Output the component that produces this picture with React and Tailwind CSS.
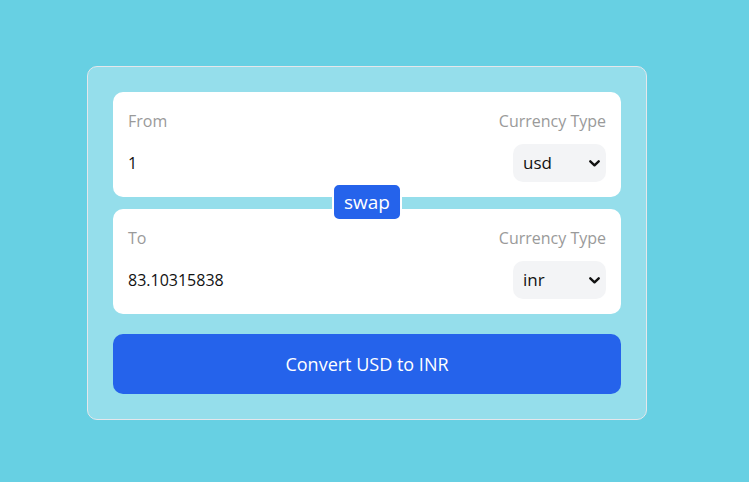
import React from "react";

const font = { fontFamily: '"Open Sans", "Noto Sans", sans-serif' };

function Chevron() {
  return (
    <svg width="11" height="7" viewBox="0 0 11 7" className="absolute right-[6px] top-[16px] pointer-events-none">
      <path d="M1.3 1.3 L5.5 5.3 L9.7 1.3" fill="none" stroke="#111" strokeWidth="2.4" strokeLinecap="round" strokeLinejoin="round" />
    </svg>
  );
}

function InputBox({ label, value, currency }) {
  return (
    <div className="bg-white px-[15px] pt-[16px] pb-[14px] rounded-[10px] text-[16px] flex">
      <div className="w-1/2">
        <label className="text-[#9a9a9a] mb-[9px] block leading-[26px]">{label}</label>
        <div className="h-[40px] leading-[40px] text-[#111]">{value}</div>
      </div>
      <div className="w-1/2 flex flex-col items-end text-right">
        <p className="text-[#9a9a9a] mb-[10px] w-full leading-[26px]">Currency Type</p>
        <div className="relative w-[93px] h-[38px] rounded-[10px] bg-[#f3f4f6] text-left pl-[10px] leading-[38px] text-[#111] text-[17px]">
          {currency}
          <Chevron />
        </div>
      </div>
    </div>
  );
}

export default function App() {
  return (
    <div className="w-[749px] h-[482px] bg-[#67d0e3] pt-[66px] pl-[87px]" style={font}>
      <div className="w-[560px] border border-[#e5e7eb] rounded-[10px] p-[25px] bg-white/30">
        <div className="w-full mb-[5px]">
          <InputBox label="From" value="1" currency="usd" />
        </div>
        <div className="relative w-full h-[2px]">
          <button className="absolute left-1/2 -translate-x-1/2 -translate-y-1/2 border-[2.5px] border-white rounded-[7px] bg-[#2563eb] text-white px-[10px] py-[2px] text-[19px] leading-[30px]">
            swap
          </button>
        </div>
        <div className="w-full mt-[5px] mb-[20px]">
          <InputBox label="To" value="83.10315838" currency="inr" />
        </div>
        <button className="w-full bg-[#2563eb] text-white px-[20px] py-[15px] rounded-[10px] text-[18px] leading-[30px]">
          Convert USD to INR
        </button>
      </div>
    </div>
  );
}
